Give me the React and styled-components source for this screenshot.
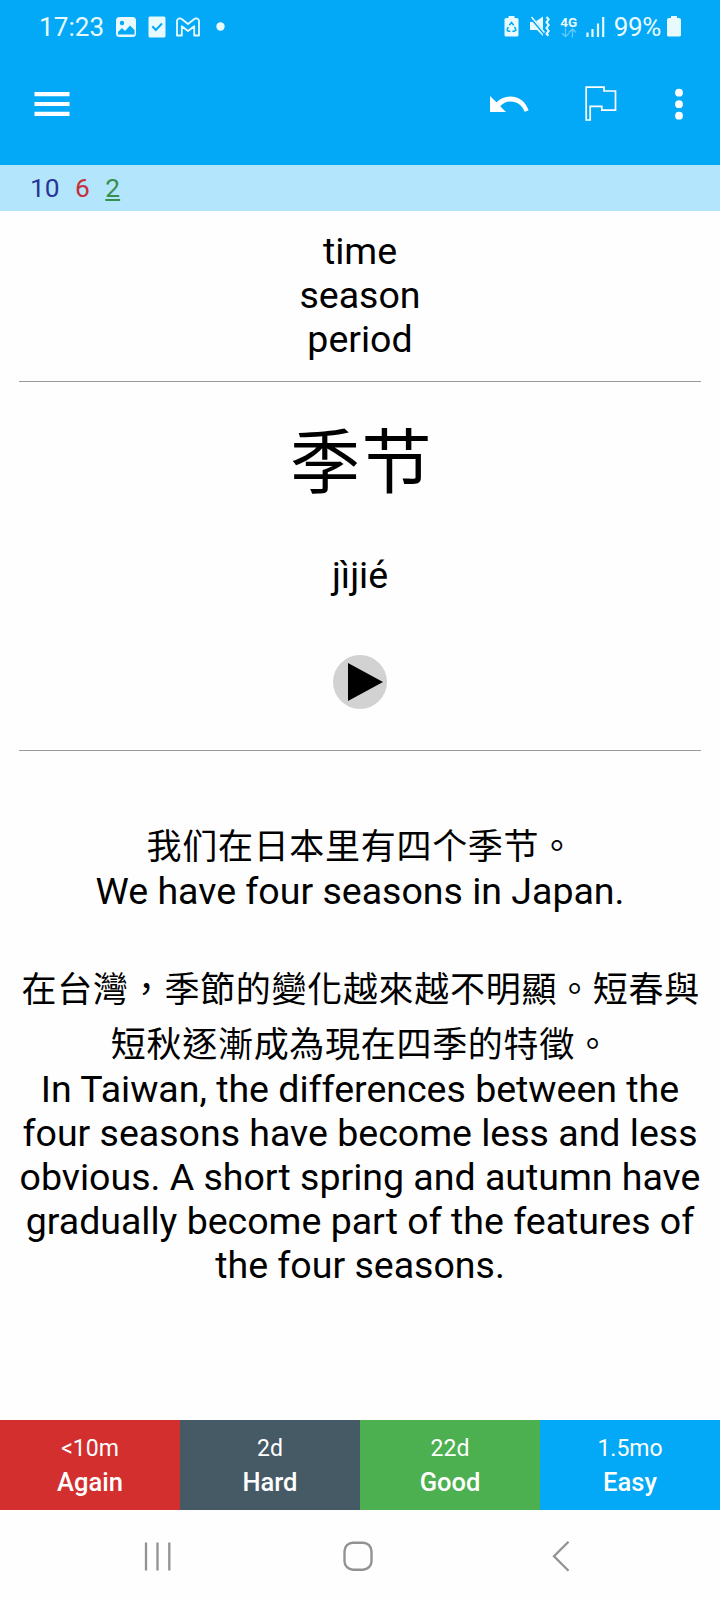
import React from "react";
import styled, { createGlobalStyle } from "styled-components";

const GlobalStyle = createGlobalStyle`
  *, *::before, *::after { box-sizing: border-box; }
  body {
    margin: 0;
    background: #fefefe;
    font-family: Roboto, "Noto Sans CJK TC", sans-serif;
  }
  svg { display: block; flex: none; }
`;

const Screen = styled.div`
  width: 720px;
  height: 1600px;
  display: flex;
  flex-direction: column;
  overflow: hidden;
  background: #fefefe;
  color: #000;
`;

const Header = styled.header`
  height: 165px;
  flex: none;
  background: #03a9f6;
  color: #fff;
`;

const StatusBar = styled.div`
  height: 53px;
  display: flex;
  justify-content: space-between;
  padding: 0 39px 0 39px;
  color: #e9fafe;
`;

const StatusGroup = styled.div`
  display: flex;
  align-items: center;
`;

const StatusText = styled.span`
  font-size: 26px;
  line-height: 54px;
  letter-spacing: ${(p) => p.$spacing || 0}px;
  white-space: nowrap;
`;

const IconSlot = styled.span`
  display: flex;
  margin-left: ${(p) => p.$gap}px;
`;

const Toolbar = styled.div`
  height: 102px;
  display: flex;
  align-items: center;
  padding: 0 37px 0 34px;
`;

const ToolbarActions = styled.div`
  display: flex;
  align-items: center;
  margin-left: auto;
`;

const IconButton = styled.button`
  display: flex;
  padding: 0;
  border: 0;
  background: none;
  color: inherit;
  margin-left: ${(p) => p.$gap || 0}px;
`;

const CountBar = styled.div`
  height: 46px;
  flex: none;
  display: flex;
  gap: 15.5px;
  padding-left: 30px;
  background: #b3e5fc;
  font-size: 26.3px;
  line-height: 46px;
`;

const Count = styled.span`
  color: ${(p) => p.$color};
  text-decoration: ${(p) => (p.$active ? "underline" : "none")};
  text-decoration-thickness: 1.5px;
  text-underline-offset: 2px;
`;

const Card = styled.main`
  flex: 1;
  padding: 18px 19px 0;
  text-align: center;
`;

const Latin = styled.p`
  margin: 0;
  font-size: 37.5px;
  line-height: 44px;
  white-space: nowrap;
`;

const Hanzi = styled.p`
  margin: 0 0 -2px;
  padding-left: 1.5px;
  font-family: "Noto Sans CJK TC", sans-serif;
  font-size: 35px;
  letter-spacing: 0.7px;
  line-height: 55px;
  white-space: nowrap;
`;

const Headword = styled.h1`
  margin: 0;
  padding: 23px 0 0 3px;
  font-family: "Noto Sans CJK TC", sans-serif;
  font-weight: 400;
  font-size: 70px;
  letter-spacing: 1.6px;
  line-height: 106px;
`;

const Pinyin = styled(Latin)`
  padding-top: 42px;
`;

const Rule = styled.hr`
  height: 1px;
  margin: ${(p) => p.$top}px 0 0;
  border: 0;
  background: #999;
`;

const PlayButton = styled.button`
  display: block;
  width: 54px;
  height: 54px;
  margin: 58px auto 0;
  padding: 0;
  border: 0;
  border-radius: 50%;
  background: #d2d2d2;
`;

const Example = styled.section`
  margin-top: ${(p) => p.$top}px;
`;

const Answers = styled.div`
  height: 90px;
  flex: none;
  display: grid;
  grid-template-columns: repeat(4, 1fr);
`;

const Answer = styled.button`
  display: flex;
  flex-direction: column;
  align-items: center;
  padding: 13px 0 0;
  border: 0;
  background: ${(p) => p.$color};
  color: #fff;
  font-family: inherit;
`;

const Interval = styled.span`
  font-size: 23px;
  line-height: 32px;
`;

const Ease = styled.span`
  font-size: 25.5px;
  font-weight: 500;
  line-height: 35px;
`;

const NavBar = styled.nav`
  height: 90px;
  flex: none;
  display: flex;
  padding: 30px 0 0 143px;
`;

const answers = [
  { interval: "<10m", ease: "Again", color: "#d32f2f" },
  { interval: "2d", ease: "Hard", color: "#455a64" },
  { interval: "22d", ease: "Good", color: "#4caf50" },
  { interval: "1.5mo", ease: "Easy", color: "#03a9f6" },
];

const PictureIcon = () => (
  <svg width="22" height="22" viewBox="0 0 22 22">
    <rect x="1" y="1" width="20" height="20" rx="3.5" fill="currentColor" />
    <circle cx="7" cy="7" r="2.2" fill="#03a9f6" />
    <path d="M3 18.500V16l4-4 3 3 5-5.500 4.500 4.500V18.500Z" fill="#03a9f6" />
  </svg>
);

const TaskIcon = () => (
  <svg width="18" height="22" viewBox="0 0 18 22">
    <rect x=".5" y=".5" width="17" height="21" rx="1.500" fill="currentColor" />
    <path d="m4.300 10.300 3.500 3.700 6.200-6.500" fill="none" stroke="#03a9f6" strokeWidth="2" />
  </svg>
);

const MailIcon = () => (
  <svg width="24" height="20" viewBox="0 0 24 20">
    <path
      d="M1 18.500V4C1 1.200 4 .8 6 2.200L12 7 18 2.200C20 .8 23 1.200 23 4V18.500H18.200V9.200L12 14 5.800 9.200V18.500Z"
      fill="none"
      stroke="currentColor"
      strokeWidth="1.800"
      strokeLinejoin="round"
    />
  </svg>
);

const DotIcon = () => (
  <svg width="9" height="9" viewBox="0 0 9 9">
    <circle cx="4.500" cy="4.500" r="4.200" fill="currentColor" />
  </svg>
);

const SaverIcon = () => (
  <svg width="15" height="21" viewBox="0 0 15 21">
    <path d="M4.500 0h6v2H13q1.500 0 1.500 1.500v15.500q0 1.500-1.500 1.500H2Q.500 20.500.500 19V3.500Q.500 2 2 2h2.500Z" fill="currentColor" />
    <path d="m5.300 9.300 2.200-2.800 2.200 2.800M10.600 10.800l1.300 3.200-1.700 1.300H8.400M6.300 15.300H4.200l-1.100-1.600 1.200-2.700" fill="none" stroke="#03a9f6" strokeWidth="1.500" />
  </svg>
);

const MuteIcon = () => (
  <svg width="20" height="21" viewBox="0 0 20 21">
    <path d="M0 6h5l8-5.500v19.500L7 14H0Z" fill="currentColor" />
    <path d="m.5 1 13.500 16" stroke="#03a9f6" strokeWidth="3" />
    <path d="m1.500 1 13 15.500" stroke="currentColor" strokeWidth="1.500" />
    <path d="m16.500 1 2.200 2.300-2.200 2.900 2.200 2.900-2.200 2.900 2.200 2.900-2.200 2.900 2 2" fill="none" stroke="currentColor" strokeWidth="2" />
  </svg>
);

const NetworkBadge = styled.span`
  display: flex;
  flex-direction: column;
  align-items: center;
  width: 18px;
  margin-left: 10px;
  font-size: 13.5px;
  font-weight: 700;
  line-height: 12px;
`;

const DataArrows = () => (
  <svg width="16" height="10" viewBox="0 0 16 10">
    <path d="M4.500 0v8.500M1 5.200l3.500 3.500L8 5.200M11.500 9.500V1M8 4.500 11.500 1 15 4.500" fill="none" stroke="#65c9fa" strokeWidth="1.300" />
  </svg>
);

const SignalIcon = () => (
  <svg width="19" height="20" viewBox="0 0 19 20">
    <path d="M1.500 15.500V20M6.500 12v8M12 6.500V20M17.200 0v20" stroke="currentColor" strokeWidth="2.200" />
  </svg>
);

const BatteryIcon = () => (
  <svg width="14" height="21" viewBox="0 0 14 21">
    <path d="M4 0h6v2h2q2 0 2 2v15q0 1.500-1.500 1.500H1.500Q0 20.500 0 19V4q0-2 2-2h2Z" fill="currentColor" />
  </svg>
);

const MenuIcon = () => (
  <svg width="36" height="26" viewBox="0 0 36 26">
    <path d="M.5 3.200h35M.5 13h35M.5 22.800h35" stroke="currentColor" strokeWidth="4.200" />
  </svg>
);

const UndoIcon = () => (
  <svg width="39" height="18" viewBox="0 0 39 18">
    <path d="M0 1v16h16L10.200 11.200Q14.500 6.500 20.500 6.500C27 6.500 32.500 10.500 34.500 16.800L38.600 15.400C36 7 29 1.500 20.500 1.500Q12.500 1.500 6.500 7.300Z" fill="currentColor" />
  </svg>
);

const FlagIcon = () => (
  <svg width="32" height="36" viewBox="0 0 32 36">
    <path d="M1.200 1.200H19V5H30.500V24.200H16.800V20.300H5.200V34H1.200Z" fill="none" stroke="currentColor" strokeWidth="1.700" />
  </svg>
);

const MoreIcon = () => (
  <svg width="8" height="32" viewBox="0 0 8 32">
    <circle cx="4" cy="4.700" r="3.900" fill="currentColor" />
    <circle cx="4" cy="16.200" r="3.900" fill="currentColor" />
    <circle cx="4" cy="27.700" r="3.900" fill="currentColor" />
  </svg>
);

const PlayIcon = () => (
  <svg width="54" height="54" viewBox="0 0 54 54">
    <path d="M15 8v38L50 27Z" fill="#000" />
  </svg>
);

const RecentsIcon = () => (
  <svg width="30" height="32" viewBox="0 0 30 32">
    <path d="M3 2.500v28M14.500 2.500v28M26.300 2.500v28" stroke="#929292" strokeWidth="2.300" />
  </svg>
);

const HomeIcon = () => (
  <svg width="30" height="32" viewBox="0 0 30 32">
    <rect x="1.500" y="2.700" width="27" height="27" rx="8.500" fill="none" stroke="#929292" strokeWidth="2.400" />
  </svg>
);

const BackIcon = () => (
  <svg width="18" height="32" viewBox="0 0 18 32">
    <path d="M16.500 1.800 2 16.300l14.500 14.500" fill="none" stroke="#929292" strokeWidth="2.300" />
  </svg>
);

export default function App() {
  return (
    <Screen>
      <GlobalStyle />
      <Header>
        <StatusBar>
          <StatusGroup>
            <StatusText $spacing={0.1}>17:23</StatusText>
            <IconSlot $gap={11}><PictureIcon /></IconSlot>
            <IconSlot $gap={11}><TaskIcon /></IconSlot>
            <IconSlot $gap={10}><MailIcon /></IconSlot>
            <IconSlot $gap={16}><DotIcon /></IconSlot>
          </StatusGroup>
          <StatusGroup>
            <SaverIcon />
            <IconSlot $gap={11}><MuteIcon /></IconSlot>
            <NetworkBadge>4G<DataArrows /></NetworkBadge>
            <IconSlot $gap={8}><SignalIcon /></IconSlot>
            <IconSlot $gap={9}><StatusText $spacing={-0.3}>99%</StatusText></IconSlot>
            <IconSlot $gap={6}><BatteryIcon /></IconSlot>
          </StatusGroup>
        </StatusBar>
        <Toolbar>
          <IconButton aria-label="Menu"><MenuIcon /></IconButton>
          <ToolbarActions>
            <IconButton aria-label="Undo"><UndoIcon /></IconButton>
            <IconButton aria-label="Flag" $gap={56}><FlagIcon /></IconButton>
            <IconButton aria-label="More" $gap={58}><MoreIcon /></IconButton>
          </ToolbarActions>
        </Toolbar>
      </Header>
      <CountBar>
        <Count $color="#283593">10</Count>
        <Count $color="#c62f3b">6</Count>
        <Count $color="#388e4c" $active>2</Count>
      </CountBar>
      <Card>
        <Latin>time<br />season<br />period</Latin>
        <Rule $top={20} />
        <Headword>季节</Headword>
        <Pinyin>jìjié</Pinyin>
        <PlayButton aria-label="Play"><PlayIcon /></PlayButton>
        <Rule $top={41} />
        <Example $top={65}>
          <Hanzi>我们在日本里有四个季节。</Hanzi>
          <Latin>We have four seasons in Japan.</Latin>
        </Example>
        <Example $top={46}>
          <Hanzi>在台灣，季節的變化越來越不明顯。短春與<br />短秋逐漸成為現在四季的特徵。</Hanzi>
          <Latin>
            In Taiwan, the differences between the<br />
            four seasons have become less and less<br />
            obvious. A short spring and autumn have<br />
            gradually become part of the features of<br />
            the four seasons.
          </Latin>
        </Example>
      </Card>
      <Answers>
        {answers.map((a) => (
          <Answer key={a.ease} $color={a.color}>
            <Interval>{a.interval}</Interval>
            <Ease>{a.ease}</Ease>
          </Answer>
        ))}
      </Answers>
      <NavBar>
        <RecentsIcon />
        <IconSlot $gap={170}><HomeIcon /></IconSlot>
        <IconSlot $gap={179}><BackIcon /></IconSlot>
      </NavBar>
    </Screen>
  );
}
